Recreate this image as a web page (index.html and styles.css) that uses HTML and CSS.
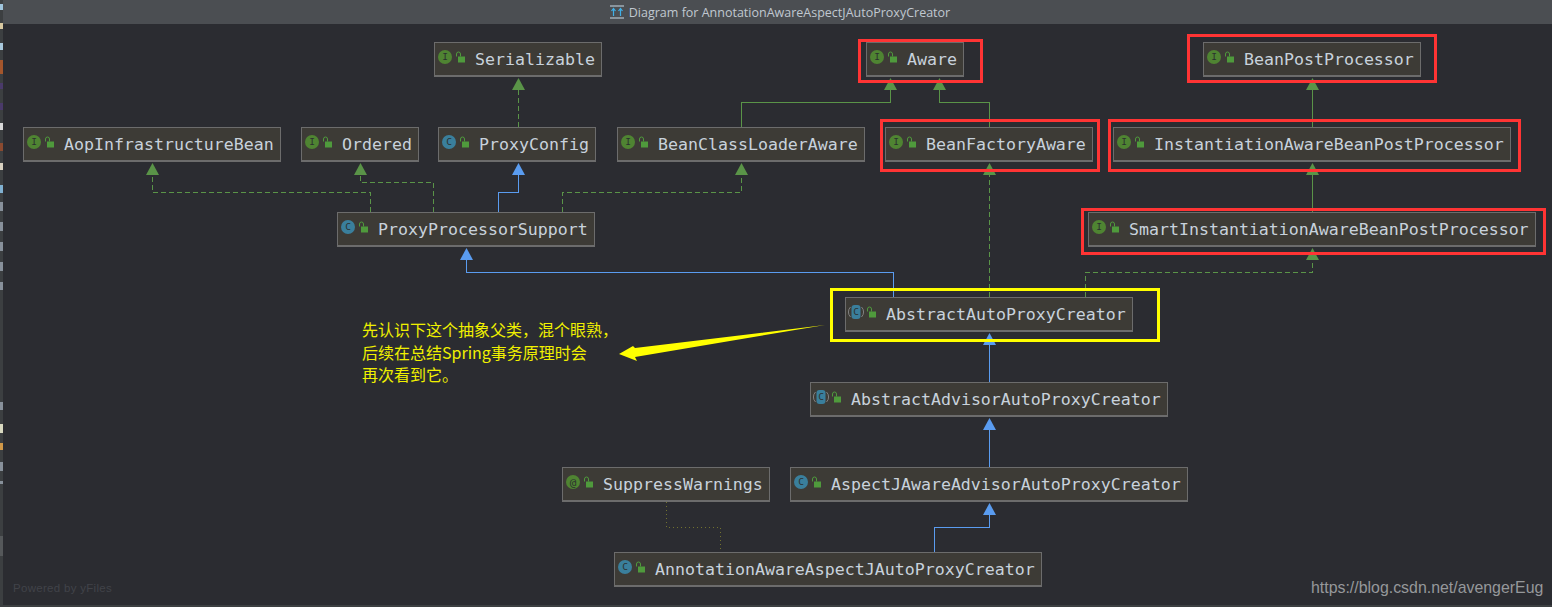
FILE: index.html
```html
<!DOCTYPE html>
<html lang="en">
<head>
<meta charset="utf-8">
<title>Diagram for AnnotationAwareAspectJAutoProxyCreator</title>
<link rel="stylesheet" href="styles.css">
</head>
<body>
<svg class="defs" width="0" height="0" aria-hidden="true">
  <defs>
    <g id="lock">
      <path class="lock-body" d="M2 5.500h7v6h-7z"/>
      <path class="lock-arc" d="M0.500 5.500v-2.500a2 2 0 0 1 4 0v2.500"/>
    </g>
  </defs>
</svg>
<div class="strip"></div>
<main class="window">
  <header class="titlebar">
    <svg class="title-icon" width="14" height="14" viewBox="0 0 14 14">
      <path class="ti-bar" d="M0 0h14v2h-14zM0 12h14v2h-14z"/>
      <path class="ti-arrow" d="M3.500 11v-7M1.500 6l2-2.500 2 2.500M10.500 11v-7M8.500 6l2-2.500 2 2.500"/>
    </svg>
    <span>Diagram for AnnotationAwareAspectJAutoProxyCreator</span>
  </header>
  <section class="canvas">
    <svg class="edges" viewBox="3 24 1549 581" width="1549" height="581">
      <g class="edge green dashed">
        <path d="M518.500 127V88"/>
        <path d="M370.500 212V192.500H152.500V172"/>
        <path d="M433.500 212V182.500H360.500V172"/>
        <path d="M562.500 212V192.500H741.500V172"/>
        <path d="M989.500 297V172"/>
        <path d="M1085.500 297V272.500H1312.500V257"/>
      </g>
      <g class="edge green">
        <path d="M741.500 127V102.500H890.500V88"/>
        <path d="M989.500 127V102.500H939.500V88"/>
        <path d="M1312.500 127V88"/>
        <path d="M1312.500 212V172"/>
      </g>
      <g class="edge blue">
        <path d="M498.500 212V192.500H518.500V172"/>
        <path d="M893.500 297V272.500H466.500V257"/>
        <path d="M989.500 382V342"/>
        <path d="M989.500 467V427"/>
        <path d="M934.500 552V527.500H989.500V512"/>
      </g>
      <path class="edge dotted" d="M666.500 502V527.500H720.500V552"/>
      <g class="head-green">
        <path d="M518.500 78l6.500 12h-13z"/>
        <path d="M152.500 163l6.500 12h-13z"/>
        <path d="M360.500 163l6.500 12h-13z"/>
        <path d="M741.500 163l6.500 12h-13z"/>
        <path d="M890.500 78l6.500 12h-13z"/>
        <path d="M939.500 78l6.500 12h-13z"/>
        <path d="M1312.500 78l6.500 12h-13z"/>
        <path d="M989.500 163l6.500 12h-13z"/>
        <path d="M1312.500 163l6.500 12h-13z"/>
        <path d="M1312.500 248l6.500 12h-13z"/>
      </g>
      <g class="head-blue">
        <path d="M518.500 163l6.500 12h-13z"/>
        <path d="M466.500 248l6.500 12h-13z"/>
        <path d="M989.500 333l6.500 12h-13z"/>
        <path d="M989.500 418l6.500 12h-13z"/>
        <path d="M989.500 503l6.500 12h-13z"/>
      </g>
    </svg>

    <div class="node n-serializable"><svg class="ico" width="26" height="18" viewBox="0 0 26 18"><circle class="c-i" cx="7" cy="8" r="7"/><text class="glyph" x="7" y="11">I</text><use href="#lock" x="18" y="2"/></svg><span>Serializable</span></div>
    <div class="node n-aware"><svg class="ico" width="26" height="18" viewBox="0 0 26 18"><circle class="c-i" cx="7" cy="8" r="7"/><text class="glyph" x="7" y="11">I</text><use href="#lock" x="18" y="2"/></svg><span>Aware</span></div>
    <div class="node n-bpp"><svg class="ico" width="26" height="18" viewBox="0 0 26 18"><circle class="c-i" cx="7" cy="8" r="7"/><text class="glyph" x="7" y="11">I</text><use href="#lock" x="18" y="2"/></svg><span>BeanPostProcessor</span></div>
    <div class="node n-aop"><svg class="ico" width="26" height="18" viewBox="0 0 26 18"><circle class="c-i" cx="7" cy="8" r="7"/><text class="glyph" x="7" y="11">I</text><use href="#lock" x="18" y="2"/></svg><span>AopInfrastructureBean</span></div>
    <div class="node n-ordered"><svg class="ico" width="26" height="18" viewBox="0 0 26 18"><circle class="c-i" cx="7" cy="8" r="7"/><text class="glyph" x="7" y="11">I</text><use href="#lock" x="18" y="2"/></svg><span>Ordered</span></div>
    <div class="node n-config"><svg class="ico" width="26" height="18" viewBox="0 0 26 18"><circle class="c-c" cx="7" cy="8" r="7"/><text class="glyph" x="7" y="11">C</text><use href="#lock" x="18" y="2"/></svg><span>ProxyConfig</span></div>
    <div class="node n-loader"><svg class="ico" width="26" height="18" viewBox="0 0 26 18"><circle class="c-i" cx="7" cy="8" r="7"/><text class="glyph" x="7" y="11">I</text><use href="#lock" x="18" y="2"/></svg><span>BeanClassLoaderAware</span></div>
    <div class="node n-factory"><svg class="ico" width="26" height="18" viewBox="0 0 26 18"><circle class="c-i" cx="7" cy="8" r="7"/><text class="glyph" x="7" y="11">I</text><use href="#lock" x="18" y="2"/></svg><span>BeanFactoryAware</span></div>
    <div class="node n-iabpp"><svg class="ico" width="26" height="18" viewBox="0 0 26 18"><circle class="c-i" cx="7" cy="8" r="7"/><text class="glyph" x="7" y="11">I</text><use href="#lock" x="18" y="2"/></svg><span>InstantiationAwareBeanPostProcessor</span></div>
    <div class="node n-support"><svg class="ico" width="26" height="18" viewBox="0 0 26 18"><circle class="c-c" cx="7" cy="8" r="7"/><text class="glyph" x="7" y="11">C</text><use href="#lock" x="18" y="2"/></svg><span>ProxyProcessorSupport</span></div>
    <div class="node n-smart"><svg class="ico" width="26" height="18" viewBox="0 0 26 18"><circle class="c-i" cx="7" cy="8" r="7"/><text class="glyph" x="7" y="11">I</text><use href="#lock" x="18" y="2"/></svg><span>SmartInstantiationAwareBeanPostProcessor</span></div>
    <div class="node n-auto"><svg class="ico" width="26" height="18" viewBox="0 0 26 18"><path class="abs-arc" d="M1.500 3a7 7 0 0 0 0 10M12.500 3a7 7 0 0 1 0 10"/><rect class="c-c" x="2.500" y="1" width="9" height="14" rx="3"/><text class="glyph" x="7" y="11">C</text><use href="#lock" x="18" y="2"/></svg><span>AbstractAutoProxyCreator</span></div>
    <div class="node n-advisor"><svg class="ico" width="26" height="18" viewBox="0 0 26 18"><path class="abs-arc" d="M1.500 3a7 7 0 0 0 0 10M12.500 3a7 7 0 0 1 0 10"/><rect class="c-c" x="2.500" y="1" width="9" height="14" rx="3"/><text class="glyph" x="7" y="11">C</text><use href="#lock" x="18" y="2"/></svg><span>AbstractAdvisorAutoProxyCreator</span></div>
    <div class="node n-suppress"><svg class="ico" width="26" height="18" viewBox="0 0 26 18"><circle class="c-i" cx="7" cy="8" r="7"/><text class="glyph at" x="7" y="11.500">@</text><use href="#lock" x="18" y="2"/></svg><span>SuppressWarnings</span></div>
    <div class="node n-aspectj"><svg class="ico" width="26" height="18" viewBox="0 0 26 18"><circle class="c-c" cx="7" cy="8" r="7"/><text class="glyph" x="7" y="11">C</text><use href="#lock" x="18" y="2"/></svg><span>AspectJAwareAdvisorAutoProxyCreator</span></div>
    <div class="node n-annotation"><svg class="ico" width="26" height="18" viewBox="0 0 26 18"><circle class="c-c" cx="7" cy="8" r="7"/><text class="glyph" x="7" y="11">C</text><use href="#lock" x="18" y="2"/></svg><span>AnnotationAwareAspectJAutoProxyCreator</span></div>

    <svg class="marks" viewBox="3 24 1549 581" width="1549" height="581">
      <g class="mark-red">
        <rect x="859.500" y="40.500" width="122" height="41"/>
        <rect x="1188.500" y="35.500" width="247" height="46"/>
        <rect x="881.500" y="120.500" width="217" height="50"/>
        <rect x="1109.500" y="120.500" width="410" height="50"/>
        <rect x="1082.500" y="209.500" width="462" height="44"/>
      </g>
      <rect class="mark-yellow" x="831.500" y="289.500" width="327" height="51"/>
      <path class="mark-arrow" d="M825 325L635 348L633 346L619 354L637 361L635 357Z"/>
    </svg>

    <p class="note">先认识下这个抽象父类，混个眼熟，<br>后续在总结Spring事务原理时会<br>再次看到它。</p>
    <div class="powered">Powered by yFiles</div>
    <div class="watermark">https://blog.csdn.net/avengerEug</div>
  </section>
  <div class="bottom"></div>
</main>
</body>
</html>
```
FILE: styles.css
```css
* { box-sizing: border-box; }
html, body { margin: 0; height: 100%; }
body {
  display: flex;
  background: #2b2c31;
  overflow: hidden;
  font-family: "DejaVu Sans Mono", monospace;
}
.defs { position: absolute; }
.strip {
  flex: 0 0 3px;
  background: linear-gradient(to bottom,
    #3c3f41 0 4px, #9fc4dc 4px 10px, #3c3f41 10px 23px, #d8c8a0 23px 29px, #3c3f41 29px 43px,
    #a8c8dc 43px 50px, #3c3f41 50px 60px, #a4562c 60px 74px, #3c3f41 74px 83px, #4a3a6a 83px 89px,
    #3c3f41 89px 103px, #4a3a6a 103px 110px, #3c3f41 110px 123px, #d8d8d8 123px 130px, #3c3f41 130px 143px,
    #8a4a30 143px 151px, #3c3f41 151px 163px, #d8d0c0 163px 170px, #3c3f41 170px 185px, #80b0d0 185px 193px,
    #3c3f41 193px 202px, #87909a 202px 211px, #3c3f41 211px 222px, #87909a 222px 231px, #3c3f41 231px 242px,
    #87909a 242px 251px, #3c3f41 251px 262px, #87909a 262px 271px, #3c3f41 271px 282px, #87909a 282px 290px,
    #3c3f41 290px 402px, #87909a 402px 410px, #3c3f41 410px 424px, #d8d8c0 424px 433px, #3c3f41 433px 443px,
    #d09848 443px 450px, #3c3f41 450px 462px, #87909a 462px 471px, #3c3f41 471px 481px, #87909a 481px 484px,
    #3c3f41 484px 536px, #55585a 536px 556px, #3c3f41 556px 100%);
}
.window {
  flex: 1;
  display: flex;
  flex-direction: column;
  min-width: 0;
}
.titlebar {
  flex: 0 0 24px;
  display: flex;
  align-items: center;
  justify-content: center;
  gap: 5px;
  padding-left: 5px;
  background: #4b4e52;
  color: #c0c8d0;
  font: 12.500px "Open Sans", sans-serif;
}
.ti-bar { fill: #8a949c; }
.ti-arrow { fill: none; stroke: #3fb0e8; stroke-width: 1.2; }
.canvas {
  flex: 1;
  position: relative;
  min-height: 0;
}
.bottom { flex: 0 0 2px; background: #3c3f41; }
.edges, .marks {
  position: absolute;
  left: 0;
  top: 0;
}
.marks { pointer-events: none; }
.edge { fill: none; stroke-width: 1; shape-rendering: crispEdges; }
.edge path { fill: none; }
.green { stroke: #5a9448; }
.blue { stroke: #5a9cf0; }
.dashed { stroke-dasharray: 5 3; }
.dotted { stroke: #72722f; stroke-dasharray: 1 3; }
.head-green { fill: #5a9448; }
.head-blue { fill: #5a9cf0; }

.node {
  position: absolute;
  height: 35px;
  display: flex;
  align-items: center;
  padding: 0 6px 0 4px;
  background: #3d3b36;
  border: 1px solid #6c6c6c;
  border-bottom-width: 2px;
  color: #c8d2dc;
  font-size: 16.6px;
  white-space: nowrap;
}
.ico {
  flex: none;
  margin: 0 11px 0 -1px;
  overflow: visible;
  transform: translateY(-1px);
}
.c-i { fill: #4f8432; }
.c-c { fill: #3a7f9c; }
.glyph {
  fill: #2b3030;
  font: 9.500px "DejaVu Sans Mono", monospace;
  text-anchor: middle;
}
.at { font-size: 11px; }
.abs-arc { fill: none; stroke: #808080; stroke-width: 1; }
.lock-body { fill: #4f9a3c; }
.lock-arc { fill: none; stroke: #4f9a3c; stroke-width: 1; }

.n-serializable { left: 431px; top: 18px; }
.n-aware { left: 863px; top: 18px; }
.n-bpp { left: 1200px; top: 18px; }
.n-aop { left: 20px; top: 103px; }
.n-ordered { left: 298px; top: 103px; }
.n-config { left: 435px; top: 103px; }
.n-loader { left: 614px; top: 103px; }
.n-factory { left: 882px; top: 103px; }
.n-iabpp { left: 1110px; top: 103px; }
.n-support { left: 334px; top: 188px; }
.n-smart { left: 1085px; top: 188px; }
.n-auto { left: 842px; top: 273px; }
.n-advisor { left: 807px; top: 358px; }
.n-suppress { left: 559px; top: 443px; }
.n-aspectj { left: 787px; top: 443px; }
.n-annotation { left: 611px; top: 528px; }

.mark-red rect { fill: none; stroke: #ff3434; stroke-width: 3; }
.mark-yellow { fill: none; stroke: #ffff00; stroke-width: 3; }
.mark-arrow { fill: #ffff00; }

.note {
  position: absolute;
  left: 359px;
  top: 294px;
  margin: 0;
  color: #f0f000;
  font: 16px/22.500px "Noto Sans CJK SC", "Liberation Sans", sans-serif;
  white-space: nowrap;
}
.powered {
  position: absolute;
  left: 10px;
  top: 558px;
  color: #414349;
  font: 11.500px "Liberation Sans", sans-serif;
  letter-spacing: 0.3px;
}
.watermark {
  position: absolute;
  left: 1308px;
  top: 555px;
  color: #96989b;
  font: 15.900px "Liberation Sans", sans-serif;
}
```
